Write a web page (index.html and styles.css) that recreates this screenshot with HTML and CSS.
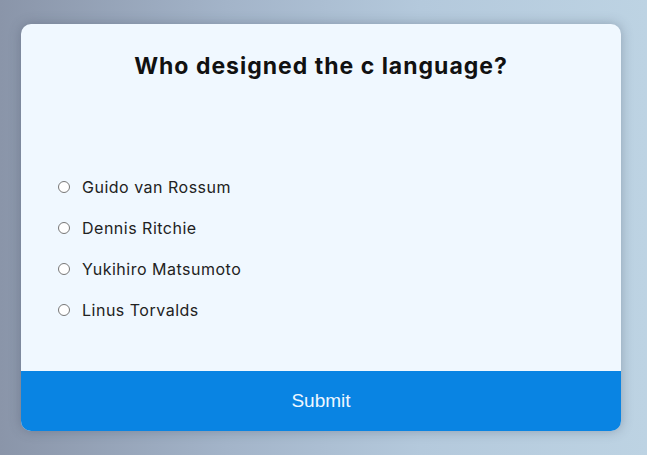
FILE: index.html
```html
<!DOCTYPE html>
<html lang="en">
<head>
<meta charset="utf-8">
<title>Quiz</title>
<link rel="stylesheet" href="styles.css">
</head>
<body>
<div class="quiz">
  <div class="quiz-header">
    <h2 class="question">Who designed the c language?</h2>
    <ul class="answers">
      <li class="answer"><input type="radio" name="a" id="a"><label for="a">Guido van Rossum</label></li>
      <li class="answer"><input type="radio" name="a" id="b"><label for="b">Dennis Ritchie</label></li>
      <li class="answer"><input type="radio" name="a" id="c"><label for="c">Yukihiro Matsumoto</label></li>
      <li class="answer"><input type="radio" name="a" id="d"><label for="d">Linus Torvalds</label></li>
    </ul>
  </div>
  <button class="submit">Submit</button>
</div>
</body>
</html>
```
FILE: styles.css
```css
html, body { height: 100%; }
body {
  margin: 0;
  background: linear-gradient(90deg, #8a95a9 0%, #a3b4c9 35%, #b4c9dc 65%, #bdd3e3 100%);
  display: flex;
  align-items: center;
  padding-left: 21px;
  font-family: "Inter", "Noto Sans", sans-serif;
  box-sizing: border-box;
}
.quiz {
  width: 600px;
  height: 407px;
  background: #f0f8ff;
  border-radius: 10px;
  box-shadow: 0 0 12px rgba(60, 70, 90, 0.35);
  overflow: hidden;
  display: flex;
  flex-direction: column;
}
.quiz-header { flex: 1; }
.question {
  margin: 28px 0 0;
  text-align: center;
  font-size: 23px;
  line-height: 28px;
  font-weight: 700;
  color: #111;
  letter-spacing: 1px;
}
.answers {
  list-style: none;
  margin: 86px 0 0;
  padding: 0 0 0 37px;
}
.answer {
  height: 41px;
  display: flex;
  align-items: center;
  font-size: 16px;
  letter-spacing: 0.5px;
  color: #222;
}
.answer input {
  appearance: none;
  -webkit-appearance: none;
  width: 12px;
  height: 12px;
  border: 1px solid #777;
  border-radius: 50%;
  margin: 0 12px 0 0;
  background: #fff;
}
.submit {
  height: 60px;
  border: none;
  background: #0984e3;
  color: #eef7ff;
  font-family: "Liberation Sans", Arial, sans-serif;
  font-size: 19px;
  display: block;
  width: 100%;
  padding: 0;
}
```
